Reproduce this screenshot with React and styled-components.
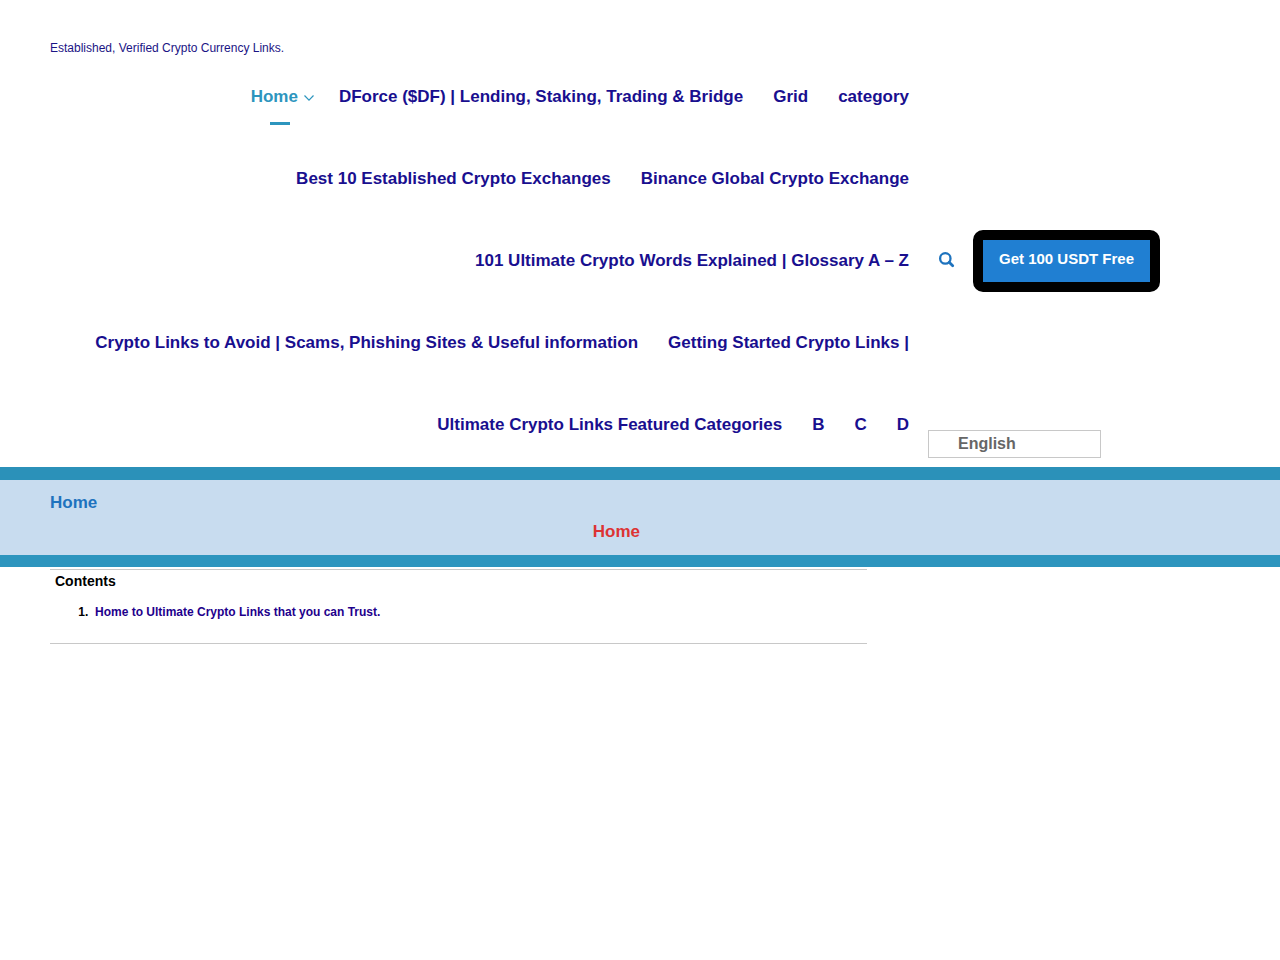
import React from "react";
import styled, { createGlobalStyle } from "styled-components";

const GlobalStyle = createGlobalStyle`
  * { box-sizing: border-box; }
  body {
    margin: 0;
    background: #fff;
    color: #000;
    font-family: "Liberation Sans", Arial, sans-serif;
  }
  a { color: inherit; text-decoration: none; }
`;

const Header = styled.header`
  padding: 41px 50px 1px;
`;

const Tagline = styled.p`
  margin: 0;
  font-size: 12px;
  line-height: 15px;
  color: #1b1485;
`;

const HeaderBody = styled.div`
  display: grid;
  grid-template-columns: minmax(0, 1fr) 302px;
`;

const Menu = styled.ul`
  display: flex;
  flex-wrap: wrap;
  justify-content: flex-end;
  margin: 0;
  padding: 0 4px 0 0;
  list-style: none;
`;

const MenuLink = styled.a`
  position: relative;
  display: flex;
  align-items: center;
  height: 82px;
  padding: 0 15px;
  font-size: 17px;
  font-weight: 700;
  white-space: nowrap;
  color: ${(p) => (p.$active ? "#2d95be" : "#190f8f")};

  &::after {
    content: "";
    display: ${(p) => (p.$active ? "block" : "none")};
    position: absolute;
    left: 50%;
    bottom: 13px;
    width: 20px;
    height: 3px;
    margin-left: -10px;
    background: #2d95be;
  }
`;

const Chevron = styled.svg`
  width: 12px;
  height: 12px;
  margin: 2px -6px 0 5px;
`;

const Tools = styled.div`
  display: grid;
  grid-template-rows: 1fr auto 1fr;
  justify-items: start;
  padding: 8px 0;
`;

const Actions = styled.div`
  grid-row: 2;
  display: flex;
  align-items: center;
  gap: 18px;
  padding-left: 10px;
`;

const SearchButton = styled.button`
  display: flex;
  padding: 0 0 4px;
  border: 0;
  background: none;
  color: #1e73be;
  cursor: pointer;
`;

const CtaButton = styled.button`
  padding: 10px 16px 14px;
  border: 10px solid #000;
  border-radius: 10px;
  background: #207fd2;
  color: #fff;
  font: 700 15px/18px "Liberation Sans", Arial, sans-serif;
  white-space: nowrap;
  cursor: pointer;
`;

const LanguageSelect = styled.select`
  grid-row: 3;
  align-self: end;
  appearance: none;
  width: 173px;
  height: 28px;
  padding: 0 29px;
  border: 1px solid #c8c8c8;
  border-radius: 0;
  background: #fff;
  color: #666;
  font: 700 16px/24px "Liberation Sans", Arial, sans-serif;
`;

const TitleBar = styled.section`
  padding: 9px 50px;
  border-top: 13px solid #2b91b9;
  border-bottom: 12px solid #2d95be;
  background: #c8dcef;
  font-size: 17px;
  font-weight: 700;
`;

const PageTitle = styled.h1`
  margin: 0;
  font-size: 17px;
  line-height: 28px;
  color: #1e73be;
`;

const Breadcrumb = styled.nav`
  width: 50%;
  line-height: 29px;
  text-align: right;
  color: #dd3333;
`;

const Content = styled.main`
  display: grid;
  grid-template-columns: minmax(0, 9fr) 4fr;
  padding: 2px 50px;
`;

const Contents = styled.section`
  padding: 2px 5px 22px;
  border-top: 1px solid #c8c8c8;
  border-bottom: 1px solid #c8c8c8;
  font-weight: 700;
`;

const ContentsTitle = styled.h2`
  margin: 0 0 14px;
  font-size: 14px;
  line-height: 18px;
`;

const ContentsList = styled.ol`
  margin: 0;
  padding-left: 40px;
  font-size: 12px;
  line-height: 17px;

  li::marker { content: counter(list-item) ".\\00a0\\00a0"; }
  a { color: #1e008c; }
`;

const MENU = [
  "DForce ($DF) | Lending, Staking, Trading & Bridge",
  "Grid",
  "category",
  "Best 10 Established Crypto Exchanges",
  "Binance Global Crypto Exchange",
  "101 Ultimate Crypto Words Explained | Glossary A – Z",
  "Crypto Links to Avoid | Scams, Phishing Sites & Useful information",
  "Getting Started Crypto Links |",
  "Ultimate Crypto Links Featured Categories",
  "B",
  "C",
  "D",
];

export default function App() {
  return (
    <>
      <GlobalStyle />
      <Header>
        <Tagline>Established, Verified Crypto Currency Links.</Tagline>
        <HeaderBody>
          <nav aria-label="Main">
            <Menu>
              <li>
                <MenuLink href="#home" $active>
                  Home
                  <Chevron viewBox="0 0 12 12" aria-hidden="true">
                    <path d="M1.5 3.5 6 8.2l4.5-4.7" fill="none" stroke="currentColor" strokeWidth="1.2" />
                  </Chevron>
                </MenuLink>
              </li>
              {MENU.map((label) => (
                <li key={label}>
                  <MenuLink href="#page">{label}</MenuLink>
                </li>
              ))}
            </Menu>
          </nav>
          <Tools>
            <Actions>
              <SearchButton type="button" aria-label="Search">
                <svg width="17" height="17" viewBox="0 0 17 17" fill="none" stroke="currentColor" aria-hidden="true">
                  <circle cx="7.3" cy="7.4" r="5.2" strokeWidth="2.3" />
                  <path d="m11.2 11.3 3.5 3.5" strokeWidth="2.8" strokeLinecap="round" />
                </svg>
              </SearchButton>
              <CtaButton type="button">Get 100 USDT Free</CtaButton>
            </Actions>
            <LanguageSelect aria-label="Language" defaultValue="English">
              <option>English</option>
            </LanguageSelect>
          </Tools>
        </HeaderBody>
      </Header>
      <TitleBar>
        <PageTitle>Home</PageTitle>
        <Breadcrumb aria-label="Breadcrumb">Home</Breadcrumb>
      </TitleBar>
      <Content>
        <Contents>
          <ContentsTitle>Contents</ContentsTitle>
          <ContentsList>
            <li>
              <a href="#trust">Home to Ultimate Crypto Links that you can Trust.</a>
            </li>
          </ContentsList>
        </Contents>
      </Content>
    </>
  );
}
